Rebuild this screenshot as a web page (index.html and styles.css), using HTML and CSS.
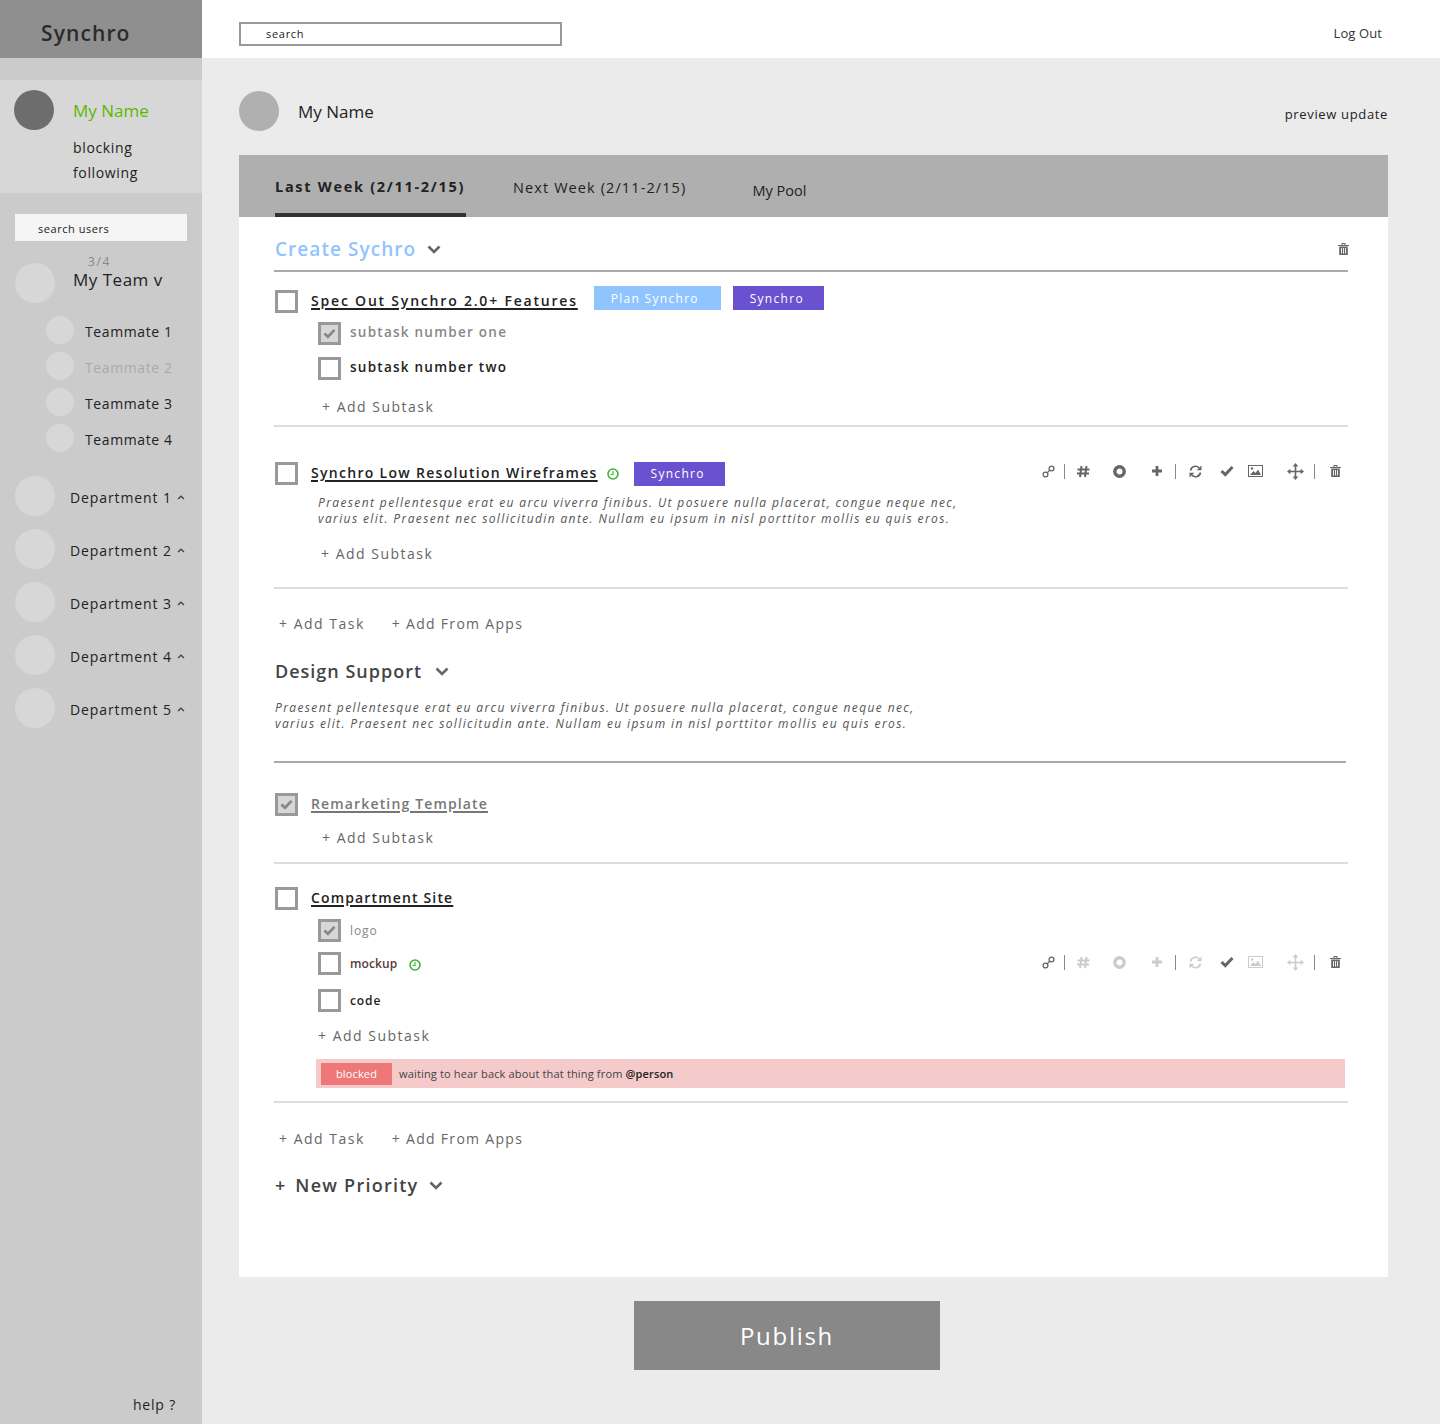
FILE: index.html
```html
<!DOCTYPE html>
<html>
  <head>
    <title>Synchro</title>
    <link rel="stylesheet" href="styles.css">
  </head>
  <body>
    <svg class="defs">
      <symbol id="i-link" viewBox="0 0 13 13"><g fill="none" stroke="currentColor" stroke-width="1.3"><circle cx="3.5" cy="9.5" r="2.4"/><circle cx="9.5" cy="3.5" r="2.4"/><path d="M5 8l3-3"/></g></symbol>
      <symbol id="i-hash" viewBox="0 0 13 13"><path d="M4.5 1L3 12M9.5 1L8 12M0.5 4.5H12.5M0 8.5H12" fill="none" stroke="currentColor" stroke-width="2"/></symbol>
      <symbol id="i-ring" viewBox="0 0 13 13"><circle cx="6.5" cy="6.5" r="4.7" fill="none" stroke="currentColor" stroke-width="3.4"/></symbol>
      <symbol id="i-plus" viewBox="0 0 12 12"><path d="M6 1V11M1 6H11" fill="none" stroke="currentColor" stroke-width="2.8"/></symbol>
      <symbol id="i-refresh" viewBox="0 0 13 13"><path d="M1.5 5.5A5 5 0 0 1 10 2.8M11.5 7.5A5 5 0 0 1 3 10.2" fill="none" stroke="currentColor" stroke-width="1.7"/><path d="M12.5 0.5V5.3H7.7zM0.5 12.5V7.7H5.3z" fill="currentColor"/></symbol>
      <symbol id="i-check" viewBox="0 0 14 12"><path d="M1.5 6L5.3 9.6L12.5 2" fill="none" stroke="currentColor" stroke-width="3"/></symbol>
      <symbol id="i-image" viewBox="0 0 15 12"><rect x="0.5" y="0.5" width="14" height="11" fill="none" stroke="currentColor"/><path d="M2 10L5.5 6L7.5 8L10 4.5L13 10z" fill="currentColor"/><circle cx="4" cy="3.5" r="1.2" fill="currentColor"/></symbol>
      <symbol id="i-move" viewBox="0 0 17 17"><path d="M8.5 3V14M3 8.5H14" fill="none" stroke="currentColor" stroke-width="1.6"/><path d="M8.5 0L11.3 3.4H5.7zM8.5 17L11.3 13.6H5.7zM0 8.5L3.4 5.7V11.3zM17 8.5L13.6 5.7V11.3z" fill="currentColor"/></symbol>
      <symbol id="i-trash" viewBox="0 0 11 12"><path d="M0 2H11V3H0zM3.5 0H7.5V2H6.5V1H4.5V2H3.5z" fill="currentColor"/><path d="M1.2 3.5H9.8V12H1.2z" fill="currentColor"/><path d="M3.5 5V10.5M5.5 5V10.5M7.5 5V10.5" stroke="#fff" stroke-width="0.9"/></symbol>
      <symbol id="i-clock" viewBox="0 0 12 12"><circle cx="6" cy="6" r="5" fill="none" stroke="currentColor" stroke-width="1.6"/><path d="M6 3V6.5H3.5" fill="none" stroke="currentColor" stroke-width="1.1"/></symbol>
      <symbol id="i-down" viewBox="0 0 14 9"><path d="M1.5 1.5L7 7L12.5 1.5" fill="none" stroke="currentColor" stroke-width="2.6"/></symbol>
      <symbol id="i-up" viewBox="0 0 8 5"><path d="M1 4L4 1.2L7 4" fill="none" stroke="currentColor" stroke-width="1.3"/></symbol>
    </svg>

    <div class="app">
      <aside class="sidebar">
        <div class="brand">Synchro</div>
        <div class="me">
          <div class="me-avatar"></div>
          <div class="me-links">
            <div class="me-name">My Name</div>
            <div class="me-link">blocking</div>
            <div class="me-link">following</div>
          </div>
        </div>
        <div class="user-search">search users</div>
        <div class="team">
          <div class="team-avatar"></div>
          <div>
            <div class="team-count">3/4</div>
            <div class="team-name">My Team v</div>
          </div>
        </div>
        <div class="mate"><span class="mate-dot"></span>Teammate 1</div>
        <div class="mate mate-off"><span class="mate-dot"></span>Teammate 2</div>
        <div class="mate"><span class="mate-dot"></span>Teammate 3</div>
        <div class="mate"><span class="mate-dot"></span>Teammate 4</div>
        <div class="dept dept-first"><span class="dept-dot"></span>Department 1<svg class="dept-arrow"><use href="#i-up"/></svg></div>
        <div class="dept"><span class="dept-dot"></span>Department 2<svg class="dept-arrow"><use href="#i-up"/></svg></div>
        <div class="dept"><span class="dept-dot"></span>Department 3<svg class="dept-arrow"><use href="#i-up"/></svg></div>
        <div class="dept"><span class="dept-dot"></span>Department 4<svg class="dept-arrow"><use href="#i-up"/></svg></div>
        <div class="dept"><span class="dept-dot"></span>Department 5<svg class="dept-arrow"><use href="#i-up"/></svg></div>
        <div class="help">help ?</div>
      </aside>

      <div class="main">
        <header class="topbar">
          <div class="search">search</div>
          <div class="logout">Log Out</div>
        </header>

        <div class="content">
          <div class="profile">
            <div class="profile-avatar"></div>
            <div class="profile-name">My Name</div>
            <div class="preview">preview update</div>
          </div>

          <div class="tabs">
            <div class="tab tab-active">Last Week (2/11-2/15)</div>
            <div class="tab tab-next">Next Week (2/11-2/15)</div>
            <div class="tab tab-pool">My Pool</div>
          </div>

          <div class="panel">
            <div class="section-head">
              <span class="section-title">Create Sychro</span>
              <svg class="chevron"><use href="#i-down"/></svg>
              <svg class="section-trash"><use href="#i-trash"/></svg>
            </div>

            <div class="task task-one">
              <div class="task-head">
                <span class="box"></span>
                <span class="task-title task-title-wide">Spec Out Synchro 2.0+ Features</span>
                <span class="tag tag-plan">Plan Synchro</span>
                <span class="tag tag-synchro tag-synchro-near">Synchro</span>
              </div>
              <div class="sub sub-one sub-done"><span class="box box-done"><svg><use href="#i-check"/></svg></span>subtask number one</div>
              <div class="sub sub-two"><span class="box"></span>subtask number two</div>
              <div class="add-sub">+ Add Subtask</div>
            </div>

            <div class="task task-two">
              <div class="task-head">
                <span class="box"></span>
                <span class="task-title task-title-long">Synchro Low Resolution Wireframes</span>
                <svg class="clock"><use href="#i-clock"/></svg>
                <span class="tag tag-synchro tag-synchro-far">Synchro</span>
                <div class="tools">
                  <svg class="t-link"><use href="#i-link"/></svg>
                  <span class="t-sep t-sep-a"></span>
                  <svg class="t-hash"><use href="#i-hash"/></svg>
                  <svg class="t-ring"><use href="#i-ring"/></svg>
                  <svg class="t-plus"><use href="#i-plus"/></svg>
                  <span class="t-sep t-sep-b"></span>
                  <svg class="t-refresh"><use href="#i-refresh"/></svg>
                  <svg class="t-check"><use href="#i-check"/></svg>
                  <svg class="t-image"><use href="#i-image"/></svg>
                  <svg class="t-move"><use href="#i-move"/></svg>
                  <span class="t-sep t-sep-c"></span>
                  <svg class="t-trash"><use href="#i-trash"/></svg>
                </div>
              </div>
              <p class="desc desc-task">Praesent pellentesque erat eu arcu viverra finibus. Ut posuere nulla placerat, congue neque nec,<br>varius elit. Praesent nec sollicitudin ante. Nullam eu ipsum in nisl porttitor mollis eu quis eros.</p>
              <div class="add-sub add-sub-two">+ Add Subtask</div>
            </div>

            <div class="add-row add-row-one"><span class="add-task">+ Add Task</span><span class="add-apps">+ Add From Apps</span></div>

            <div class="priority">
              <span class="priority-title">Design Support</span>
              <svg class="chevron"><use href="#i-down"/></svg>
            </div>
            <p class="desc desc-priority">Praesent pellentesque erat eu arcu viverra finibus. Ut posuere nulla placerat, congue neque nec,<br>varius elit. Praesent nec sollicitudin ante. Nullam eu ipsum in nisl porttitor mollis eu quis eros.</p>
            <div class="rule"></div>

            <div class="task task-three">
              <div class="task-head">
                <span class="box box-done box-done-big"><svg><use href="#i-check"/></svg></span>
                <span class="task-title task-title-done">Remarketing Template</span>
              </div>
              <div class="add-sub add-sub-three">+ Add Subtask</div>
            </div>

            <div class="task task-four">
              <div class="task-head">
                <span class="box"></span>
                <span class="task-title">Compartment Site</span>
              </div>
              <div class="sub sub-small sub-logo sub-done"><span class="box box-done"><svg><use href="#i-check"/></svg></span>logo</div>
              <div class="sub sub-small sub-mockup">
                <span class="box"></span><span class="mockup">mockup</span>
                <svg class="clock clock-sub"><use href="#i-clock"/></svg>
                <div class="tools tools-sub">
                  <svg class="t-link"><use href="#i-link"/></svg>
                  <span class="t-sep t-sep-a"></span>
                  <svg class="t-hash t-off"><use href="#i-hash"/></svg>
                  <svg class="t-ring t-off"><use href="#i-ring"/></svg>
                  <svg class="t-plus t-off"><use href="#i-plus"/></svg>
                  <span class="t-sep t-sep-b"></span>
                  <svg class="t-refresh t-off"><use href="#i-refresh"/></svg>
                  <svg class="t-check"><use href="#i-check"/></svg>
                  <svg class="t-image t-off"><use href="#i-image"/></svg>
                  <svg class="t-move t-off"><use href="#i-move"/></svg>
                  <span class="t-sep t-sep-c"></span>
                  <svg class="t-trash"><use href="#i-trash"/></svg>
                </div>
              </div>
              <div class="sub sub-small sub-code"><span class="box"></span>code</div>
              <div class="add-sub add-sub-four">+ Add Subtask</div>
              <div class="blocked"><span class="blocked-tag">blocked</span>waiting to hear back about that thing from&nbsp;<b>@person</b></div>
            </div>

            <div class="add-row add-row-two"><span class="add-task">+ Add Task</span><span class="add-apps">+ Add From Apps</span></div>

            <div class="priority priority-new">
              <span class="priority-plus">+</span>
              <span class="priority-title">New Priority</span>
              <svg class="chevron"><use href="#i-down"/></svg>
            </div>
          </div>

          <button class="publish">Publish</button>
        </div>
      </div>
    </div>
  </body>
</html>
```

FILE: styles.css
```css
body {
  margin: 0;
  font-family: "Open Sans", sans-serif;
  color: #222;
}
p {
  margin: 0;
}
.defs {
  display: none;
}
.app {
  display: flex;
  min-height: 1424px;
}

/* sidebar */
.sidebar {
  width: 202px;
  flex: none;
  display: flex;
  flex-direction: column;
  background: #cbcbcb;
}
.brand {
  height: 58px;
  line-height: 66px;
  padding-left: 41px;
  margin-bottom: 22px;
  box-sizing: border-box;
  background: #8f8f8f;
  font-size: 21px;
  font-weight: 600;
  letter-spacing: 1.1px;
  color: #2b2b2b;
}
.me {
  height: 113px;
  display: flex;
  background: #d7d7d7;
}
.me-avatar {
  width: 40px;
  height: 40px;
  margin: 10px 0 0 14px;
  border-radius: 50%;
  background: #6d6d6d;
}
.me-links {
  margin-left: 19px;
  padding-top: 18px;
}
.me-name {
  font-size: 17px;
  line-height: 26px;
  letter-spacing: 0;
  color: #5cb800;
  margin-bottom: 11px;
}
.me-link {
  font-size: 14px;
  line-height: 25px;
  letter-spacing: 0.65px;
}
.user-search {
  height: 27px;
  margin: 21px 15px 0;
  padding-left: 23px;
  line-height: 29px;
  background: #f5f5f5;
  font-size: 11px;
  letter-spacing: 0.55px;
}
.team {
  display: flex;
  height: 63px;
  margin-top: 12px;
  padding-left: 15px;
}
.team-avatar {
  width: 40px;
  height: 40px;
  margin-top: 10px;
  margin-right: 18px;
  border-radius: 50%;
  background: #d7d7d7;
}
.team-count {
  font-size: 12px;
  line-height: 14px;
  margin-left: 15px;
  letter-spacing: 1.6px;
  color: #888;
  margin-top: 2px;
}
.team-name {
  font-size: 17px;
  line-height: 22px;
  letter-spacing: 0.5px;
}
.mate {
  display: flex;
  height: 28px;
  margin-bottom: 8px;
  padding-left: 46px;
  font-size: 14px;
  line-height: 32px;
  letter-spacing: 0.6px;
}
.mate-off {
  color: #aaa;
}
.mate-dot {
  width: 28px;
  height: 28px;
  margin-right: 11px;
  border-radius: 50%;
  background: #d7d7d7;
}
.dept {
  display: flex;
  height: 40px;
  margin-bottom: 13px;
  padding-left: 15px;
  font-size: 14px;
  line-height: 44px;
  letter-spacing: 0.9px;
}
.dept-first {
  margin-top: 16px;
}
.dept-dot {
  width: 40px;
  height: 40px;
  margin-right: 15px;
  border-radius: 50%;
  background: #d7d7d7;
}
.dept-arrow {
  width: 8px;
  height: 5px;
  margin: 19px 0 0 5px;
  color: #444;
}
.help {
  margin-top: auto;
  padding: 0 26px 9px 0;
  text-align: right;
  font-size: 14px;
  line-height: 20px;
  letter-spacing: 0.8px;
}

/* main */
.main {
  flex: 1;
  background: #ebebeb;
}
.topbar {
  height: 58px;
  display: flex;
  align-items: center;
  justify-content: space-between;
  padding: 0 58px 0 37px;
  background: #fff;
}
.search {
  width: 323px;
  height: 24px;
  box-sizing: border-box;
  margin-top: 10px;
  padding-left: 25px;
  border: 2px solid #999;
  font-size: 11px;
  line-height: 20px;
  letter-spacing: 0.7px;
}
.logout {
  font-size: 13px;
  letter-spacing: 0.1px;
  margin-top: 8px;
  color: #333;
}
.content {
  padding: 33px 52px 0 37px;
}
.profile {
  display: flex;
  align-items: center;
  height: 40px;
}
.profile-avatar {
  width: 40px;
  height: 40px;
  margin-right: 19px;
  border-radius: 50%;
  background: #b0b0b0;
}
.profile-name {
  font-size: 17px;
  letter-spacing: 0;
}
.preview {
  margin-left: auto;
  margin-top: 6px;
  font-size: 13px;
  letter-spacing: 0.65px;
}
.tabs {
  display: flex;
  height: 62px;
  margin-top: 24px;
  background: #afafaf;
}
.tab {
  height: 62px;
  box-sizing: border-box;
  font-size: 14.5px;
  letter-spacing: 1.1px;
  line-height: 66px;
}
.tab-active {
  margin-left: 36px;
  padding-right: 1px;
  border-bottom: 4px solid #333;
  font-weight: 700;
  line-height: 64px;
  letter-spacing: 1.7px;
}
.tab-next {
  margin-left: 47px;
}
.tab-pool {
  margin-left: 66px;
  line-height: 71px;
  letter-spacing: 0;
}
.panel {
  height: 1060px;
  box-sizing: border-box;
  padding: 0 40px 0 35px;
  background: #fff;
}
.section-head {
  display: flex;
  align-items: center;
  height: 55px;
  box-sizing: border-box;
  padding: 11px 0 0 1px;
  border-bottom: 2px solid #aaa;
}
.section-title {
  font-size: 19px;
  font-weight: 600;
  letter-spacing: 1.05px;
  color: #8fc4ff;
}
.chevron {
  width: 14px;
  height: 9px;
  margin-left: 11px;
  color: #666;
}
.section-trash {
  width: 11px;
  height: 12px;
  margin-left: auto;
  margin-right: -1px;
  color: #666;
}

/* tasks */
.task {
  border-bottom: 2px solid #ddd;
}
.task-one {
  padding: 18px 0 7px;
}
.task-two {
  padding: 35px 0 22px;
}
.task-three {
  padding: 30px 0 13px;
}
.task-four {
  padding: 23px 0 13px;
}
.task-head {
  display: flex;
  align-items: center;
  height: 23px;
  padding-left: 1px;
}
.box {
  display: flex;
  align-items: center;
  justify-content: center;
  width: 23px;
  height: 23px;
  flex: none;
  box-sizing: border-box;
  border: 3px solid #999;
  background: #fff;
}
.box-done {
  background: #d7d7d7;
}
.box-done svg {
  width: 13px;
  height: 11px;
  color: #888;
}
.task-title {
  margin: -2px 0 0 13px;
  font-size: 14px;
  font-weight: 600;
  letter-spacing: 1.15px;
  text-decoration: underline;
  text-underline-offset: 2px;
  text-decoration-thickness: 1.5px;
}
.task-title-wide {
  letter-spacing: 1.8px;
}
.task-title-long {
  letter-spacing: 1.3px;
}
.task-title-done {
  color: #777;
}
.tag {
  display: flex;
  align-items: center;
  justify-content: center;
  height: 24px;
  padding-right: 3px;
  box-sizing: border-box;
  color: #fff;
  font-size: 12px;
  letter-spacing: 1.3px;
}
.tag-plan {
  width: 127px;
  margin: -7px 0 0 16px;
  padding-right: 5px;
  background: #8fc4ff;
}
.tag-synchro {
  width: 91px;
  background: #6a51d0;
}
.tag-synchro-near {
  margin: -7px 0 0 12px;
}
.tag-synchro-far {
  margin-left: 15px;
}
.clock {
  width: 12px;
  height: 12px;
  margin-left: 9px;
  color: #3cb531;
}
.sub {
  display: flex;
  height: 23px;
  padding-left: 44px;
  font-size: 13.5px;
  font-weight: 600;
  line-height: 20px;
  letter-spacing: 1.25px;
}
.sub .box {
  margin-right: 9px;
}
.sub-done {
  color: #888;
}
.sub-one {
  margin-top: 9px;
}
.sub-two {
  margin-top: 12px;
}
.sub-small {
  font-size: 12px;
  line-height: 24px;
  letter-spacing: 0.9px;
}
.sub-logo {
  margin-top: 9px;
  font-weight: 400;
}
.sub-mockup {
  margin-top: 10px;
}
.sub-code {
  margin-top: 14px;
}
.mockup {
  color: #5a3c3c;
  letter-spacing: 0.1px;
}
.clock-sub {
  margin-left: 12px;
  margin-top: 7px;
}
.add-sub {
  height: 24px;
  margin-top: 14px;
  padding-left: 48px;
  font-size: 14px;
  line-height: 25px;
  letter-spacing: 1.5px;
  color: #666;
}
.add-sub-two {
  padding-left: 47px;
}
.add-sub-three {
  margin-top: 9px;
}
.add-sub-four {
  margin-top: 11px;
  padding-left: 44px;
}
.desc {
  font-size: 12px;
  font-style: italic;
  line-height: 16px;
  letter-spacing: 1.38px;
  color: #555;
}
.desc-task {
  margin: 10px 0 0 44px;
}
.desc-priority {
  margin: 15px 0 0 1px;
}
.add-row {
  display: flex;
  height: 24px;
  padding-left: 5px;
  font-size: 14px;
  line-height: 25px;
  letter-spacing: 1.5px;
  color: #666;
}
.add-task {
  margin-right: 27px;
}
.add-apps {
  letter-spacing: 1.3px;
}
.add-row-one {
  margin-top: 22px;
}
.add-row-two {
  margin-top: 23px;
}
.priority {
  display: flex;
  align-items: center;
  height: 28px;
  margin-top: 22px;
  padding-left: 1px;
}
.priority .chevron {
  margin-left: 13px;
}
.priority-title {
  font-size: 18px;
  font-weight: 600;
  letter-spacing: 1px;
  color: #444;
}
.priority-new {
  margin-top: 21px;
}
.priority-new .chevron {
  margin-left: 10px;
}
.priority-new .priority-title {
  letter-spacing: 1.25px;
}
.priority-plus {
  margin-right: 10px;
  font-size: 18px;
  font-weight: 600;
  color: #444;
}
.rule {
  height: 2px;
  margin: 29px 2px 0 0;
  background: #aaa;
}
.blocked {
  display: flex;
  align-items: center;
  height: 29px;
  margin: 12px 3px 0 42px;
  padding-left: 5px;
  background: #f4caca;
  font-size: 11px;
  letter-spacing: 0.16px;
  color: #444;
}
.blocked b {
  font-weight: 600;
  color: #222;
}
.blocked-tag {
  display: flex;
  align-items: center;
  justify-content: center;
  width: 71px;
  height: 22px;
  margin-right: 7px;
  background: #ee7777;
  color: #fff;
}

/* toolbar icons */
.tools {
  display: flex;
  align-items: center;
  margin-left: auto;
  padding-right: 7px;
  margin-top: -5px;
  color: #666;
}
.tools-sub {
  align-self: center;
  margin-top: -3px;
}
.tools svg {
  flex: none;
}
.t-off {
  color: #ccc;
}
.t-sep {
  width: 1px;
  height: 15px;
  background: #888;
}
.t-link {
  width: 13px;
  height: 13px;
}
.t-sep-a {
  margin-left: 9px;
}
.t-hash {
  width: 13px;
  height: 13px;
  margin-left: 12px;
}
.t-ring {
  width: 13px;
  height: 13px;
  margin-left: 23px;
}
.t-plus {
  width: 12px;
  height: 12px;
  margin-left: 25px;
}
.t-sep-b {
  margin-left: 12px;
}
.t-refresh {
  width: 13px;
  height: 13px;
  margin-left: 13px;
}
.t-check {
  width: 14px;
  height: 12px;
  margin-left: 18px;
}
.t-image {
  width: 15px;
  height: 12px;
  margin-left: 14px;
}
.t-move {
  width: 17px;
  height: 17px;
  margin-left: 24px;
}
.t-sep-c {
  margin-left: 10px;
}
.t-trash {
  width: 11px;
  height: 12px;
  margin-left: 15px;
}

.publish {
  display: block;
  width: 306px;
  height: 69px;
  margin: 24px 0 0 395px;
  border: 0;
  background: #888;
  color: #fff;
  font-family: inherit;
  font-size: 24px;
  letter-spacing: 1.7px;
}
```
